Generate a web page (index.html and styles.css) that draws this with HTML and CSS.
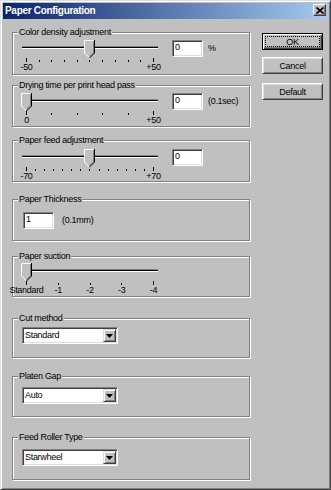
FILE: index.html
```html
<!DOCTYPE html>
<html>
<head>
    <title>Paper Configuration</title>
    <link rel="stylesheet" href="styles.css">
</head>
<body>
    <div class="window">
        <div class="titlebar">
            <span class="title">Paper Configuration</span>
            <div class="close">
                <svg width="8" height="7" viewBox="0 0 8 7"><path d="M0.5 0.5L7.5 6.5M7.5 0.5L0.5 6.5" stroke="#000" stroke-width="1.6"/></svg>
            </div>
        </div>

        <div class="client">
            <div class="groups">
                <!-- Color density -->
                <div class="group g-density">
                    <div class="caption">Color density adjustment</div>
                    <div class="row">
                        <div class="slider">
                            <div class="track">
                                <div class="channel"></div>
                                <svg class="thumb" style="left: 62px" width="11" height="18" viewBox="0 0 11 18"><polygon points="0,0 11,0 11,13 5.5,18 0,13" fill="#c0c0c0"/><path d="M0.5 13V0.5H10" stroke="#fff" fill="none"/><path d="M0.5 13L5.5 18" stroke="#fff"/><path d="M10.5 0V13L5.5 18" stroke="#000" fill="none"/><path d="M9.5 1V12.5L5.5 16.5" stroke="#808080" fill="none"/></svg>
                            </div>
                            <div class="ticks"><span></span><span></span><span></span><span></span><span></span><span></span><span></span><span></span><span></span><span></span><span></span></div>
                            <div class="scale"><span>-50</span><span>+50</span></div>
                        </div>
                        <div class="edit">0</div>
                        <span class="unit">%</span>
                    </div>
                </div>

                <!-- Drying time -->
                <div class="group g-drying">
                    <div class="caption">Drying time per print head pass</div>
                    <div class="row">
                        <div class="slider">
                            <div class="track">
                                <div class="channel"></div>
                                <svg class="thumb" style="left: -1px" width="11" height="18" viewBox="0 0 11 18"><polygon points="0,0 11,0 11,13 5.5,18 0,13" fill="#c0c0c0"/><path d="M0.5 13V0.5H10" stroke="#fff" fill="none"/><path d="M0.5 13L5.5 18" stroke="#fff"/><path d="M10.5 0V13L5.5 18" stroke="#000" fill="none"/><path d="M9.5 1V12.5L5.5 16.5" stroke="#808080" fill="none"/></svg>
                            </div>
                            <div class="ticks"><span></span><span></span><span></span><span></span><span></span><span></span></div>
                            <div class="scale"><span>0</span><span>+50</span></div>
                        </div>
                        <div class="edit">0</div>
                        <span class="unit">(0.1sec)</span>
                    </div>
                </div>

                <!-- Paper feed -->
                <div class="group g-feed">
                    <div class="caption">Paper feed adjustment</div>
                    <div class="row">
                        <div class="slider">
                            <div class="track">
                                <div class="channel"></div>
                                <svg class="thumb" style="left: 62px" width="11" height="18" viewBox="0 0 11 18"><polygon points="0,0 11,0 11,13 5.5,18 0,13" fill="#c0c0c0"/><path d="M0.5 13V0.5H10" stroke="#fff" fill="none"/><path d="M0.5 13L5.5 18" stroke="#fff"/><path d="M10.5 0V13L5.5 18" stroke="#000" fill="none"/><path d="M9.5 1V12.5L5.5 16.5" stroke="#808080" fill="none"/></svg>
                            </div>
                            <div class="ticks"><span></span><span></span><span></span><span></span><span></span><span></span><span></span><span></span><span></span><span></span><span></span><span></span><span></span><span></span><span></span></div>
                            <div class="scale"><span>-70</span><span>+70</span></div>
                        </div>
                        <div class="edit">0</div>
                    </div>
                </div>

                <!-- Paper thickness -->
                <div class="group g-thick">
                    <div class="caption">Paper Thickness</div>
                    <div class="row">
                        <div class="edit">1</div>
                        <span class="unit">(0.1mm)</span>
                    </div>
                </div>

                <!-- Paper suction -->
                <div class="group g-suction">
                    <div class="caption">Paper suction</div>
                    <div class="row">
                        <div class="slider">
                            <div class="track">
                                <div class="channel"></div>
                                <svg class="thumb" style="left: -1px" width="11" height="18" viewBox="0 0 11 18"><polygon points="0,0 11,0 11,13 5.5,18 0,13" fill="#c0c0c0"/><path d="M0.5 13V0.5H10" stroke="#fff" fill="none"/><path d="M0.5 13L5.5 18" stroke="#fff"/><path d="M10.5 0V13L5.5 18" stroke="#000" fill="none"/><path d="M9.5 1V12.5L5.5 16.5" stroke="#808080" fill="none"/></svg>
                            </div>
                            <div class="ticks"><span></span><span></span><span></span><span></span><span></span></div>
                            <div class="scale"><span>Standard</span><span>-1</span><span>-2</span><span>-3</span><span>-4</span></div>
                        </div>
                    </div>
                </div>

                <!-- Cut method -->
                <div class="group g-cut">
                    <div class="caption">Cut method</div>
                    <div class="row">
                        <div class="combo">
                            <span class="combo-text">Standard</span>
                            <span class="combo-btn"><svg width="7" height="4" viewBox="0 0 7 4"><polygon points="0,0 7,0 3.5,4" fill="#000"/></svg></span>
                        </div>
                    </div>
                </div>

                <!-- Platen gap -->
                <div class="group g-platen">
                    <div class="caption">Platen Gap</div>
                    <div class="row">
                        <div class="combo">
                            <span class="combo-text">Auto</span>
                            <span class="combo-btn"><svg width="7" height="4" viewBox="0 0 7 4"><polygon points="0,0 7,0 3.5,4" fill="#000"/></svg></span>
                        </div>
                    </div>
                </div>

                <!-- Feed roller -->
                <div class="group g-roller">
                    <div class="caption">Feed Roller Type</div>
                    <div class="row">
                        <div class="combo">
                            <span class="combo-text">Starwheel</span>
                            <span class="combo-btn"><svg width="7" height="4" viewBox="0 0 7 4"><polygon points="0,0 7,0 3.5,4" fill="#000"/></svg></span>
                        </div>
                    </div>
                </div>
            </div>

            <div class="buttons">
                <div class="button default"><span>OK</span></div>
                <div class="button cancel">Cancel</div>
                <div class="button reset">Default</div>
            </div>
        </div>
    </div>
</body>
</html>
```

FILE: styles.css
```css
body {
    margin: 0;
    background-color: #c0c0c0;
    font-family: "Liberation Sans", Arial, sans-serif;
    font-size: 9px;
    letter-spacing: -0.3px;
    color: #000;
}

.window {
    width: 331px;
    height: 490px;
    box-sizing: border-box;
    padding: 2px;
    background-color: #c0c0c0;
    border: 1px solid;
    border-color: #dfdfdf #404040 #404040 #dfdfdf;
    box-shadow: inset 1px 1px 0 #fff, inset -1px -1px 0 #808080;
}

.titlebar {
    height: 16px;
    display: flex;
    justify-content: space-between;
    padding: 0 2px 0 2px;
    background: linear-gradient(to right, #0a246a, #a6caf0);
}

.title {
    color: #fff;
    font-weight: bold;
    font-size: 10px;
    line-height: 16px;
}

.close {
    width: 13px;
    height: 12px;
    margin-top: 1px;
    box-sizing: border-box;
    display: flex;
    align-items: center;
    justify-content: center;
    background-color: #c0c0c0;
    border: 1px solid;
    border-color: #fff #404040 #404040 #fff;
    box-shadow: inset -1px -1px 0 #808080;
}

.client {
    display: flex;
    padding: 13px 0 0 9px;
}

.groups {
    width: 238px;
    display: flex;
    flex-direction: column;
}

/* etched group box */
.group {
    box-sizing: border-box;
    border: 1px solid #808080;
    box-shadow: inset 1px 1px 0 #fff, 1px 1px 0 #fff;
}

.caption {
    width: fit-content;
    height: 11px;
    line-height: 11px;
    margin: -6px 0 -5px 5px;
    padding: 0 1px;
    background-color: #c0c0c0;
}

.g-density { height: 43px; }
.g-drying  { height: 42px; margin-top: 10px; }
.g-feed    { height: 42px; margin-top: 13px; }
.g-thick   { height: 42px; margin-top: 17px; }
.g-suction { height: 41px; margin-top: 15px; }
.g-cut     { height: 40px; margin-top: 21px; }
.g-platen  { height: 41px; margin-top: 18px; }
.g-roller  { height: 43px; margin-top: 20px; }

.row {
    display: flex;
    align-items: flex-start;
    padding-left: 9px;
}

.g-density .row { padding-top: 7px; }
.g-drying .row  { padding-top: 7px; }
.g-feed .row    { padding-top: 8px; }
.g-thick .row   { padding-top: 12px; padding-left: 10px; }
.g-suction .row { padding-top: 6px; }
.g-cut .row     { padding-top: 8px; }
.g-platen .row  { padding-top: 10px; }
.g-roller .row  { padding-top: 11px; }

/* trackbar */
.slider {
    width: 136px;
}

.track {
    position: relative;
    height: 18px;
    padding-top: 6px;
    box-sizing: border-box;
}

.channel {
    height: 1px;
    background-color: #000;
    border-top: 1px solid #808080;
    border-bottom: 1px solid #fff;
}

.thumb {
    position: absolute;
    top: 0;
    display: block;
}

.ticks {
    display: flex;
    justify-content: space-between;
    align-items: flex-end;
    height: 4px;
    margin: 0 4px;
}

.ticks span {
    width: 1px;
    height: 2px;
    background-color: #000;
}

.ticks span:first-child,
.ticks span:last-child {
    height: 4px;
}

.scale {
    display: flex;
    justify-content: space-between;
    height: 10px;
    line-height: 10px;
    margin: 0 4px;
}

.scale span {
    width: 1px;
    display: flex;
    justify-content: center;
    white-space: nowrap;
}

/* edit box */
.edit {
    width: 31px;
    height: 17px;
    box-sizing: border-box;
    margin-left: 14px;
    padding-left: 2px;
    line-height: 13px;
    background-color: #fff;
    border: 1px solid;
    border-color: #808080 #fff #fff #808080;
    box-shadow: inset 1px 1px 0 #404040, inset -1px -1px 0 #dfdfdf;
}

.g-thick .edit {
    margin-left: 0;
}

.unit {
    margin-top: 3px;
    margin-left: 5px;
    line-height: 11px;
}

.g-thick .unit {
    margin-left: 8px;
}

/* combo box */
.combo {
    width: 96px;
    height: 17px;
    box-sizing: border-box;
    display: flex;
    padding: 1px;
    background-color: #fff;
    border: 1px solid;
    border-color: #808080 #fff #fff #808080;
    box-shadow: inset 1px 1px 0 #404040, inset -1px -1px 0 #dfdfdf;
}

.combo-text {
    flex: 1;
    padding-left: 1px;
    line-height: 13px;
}

.combo-btn {
    width: 13px;
    height: 13px;
    box-sizing: border-box;
    display: flex;
    align-items: center;
    justify-content: center;
    background-color: #c0c0c0;
    border: 1px solid;
    border-color: #dfdfdf #404040 #404040 #dfdfdf;
    box-shadow: inset 1px 1px 0 #fff, inset -1px -1px 0 #808080;
}

/* push buttons */
.buttons {
    margin-left: 12px;
    display: flex;
    flex-direction: column;
}

.button {
    width: 61px;
    height: 17px;
    box-sizing: border-box;
    display: flex;
    align-items: center;
    justify-content: center;
    background-color: #c0c0c0;
    border: 1px solid;
    border-color: #fff #404040 #404040 #fff;
    box-shadow: inset 1px 1px 0 #dfdfdf, inset -1px -1px 0 #808080;
}

.default {
    margin-top: 1px;
    border-color: #000;
    box-shadow: inset 1px 1px 0 #fff, inset -1px -1px 0 #404040, inset -2px -2px 0 #808080;
    outline: 1px dotted #000;
    outline-offset: -4px;
}

.cancel {
    margin-top: 7px;
}

.reset {
    margin-top: 9px;
}
```
